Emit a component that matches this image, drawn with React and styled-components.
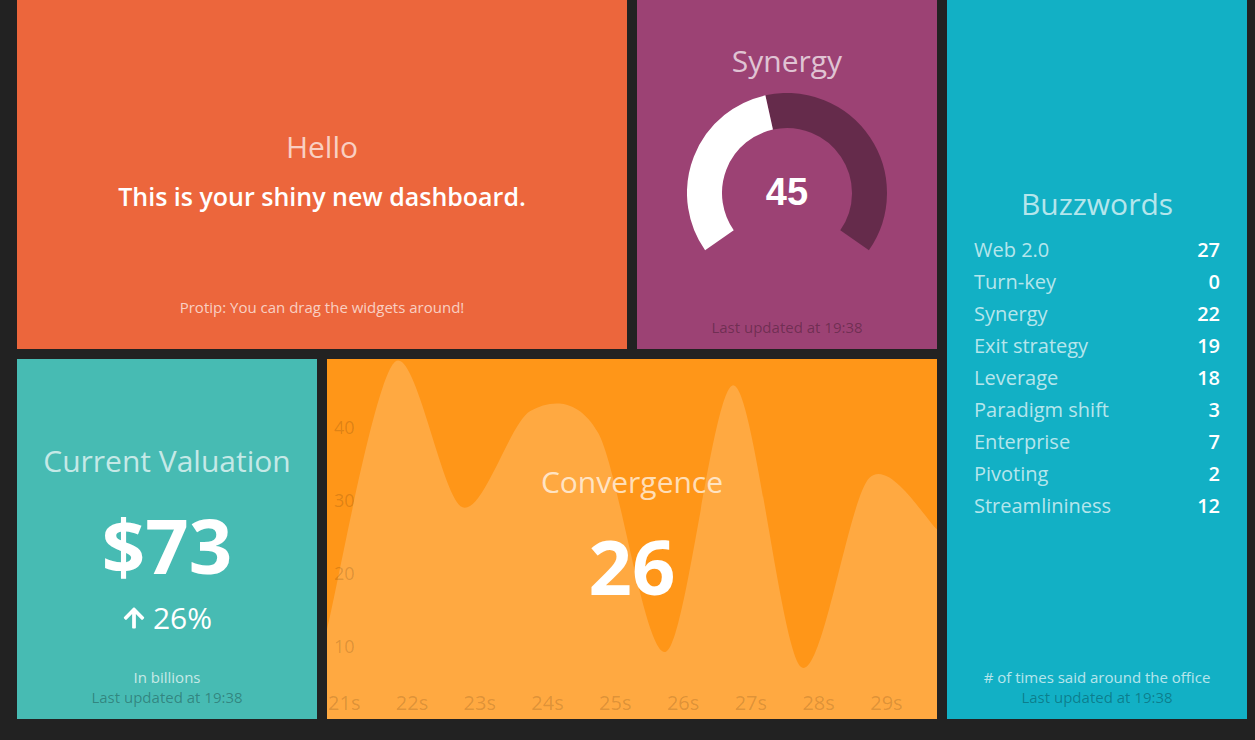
import React from 'react';
import styled, { createGlobalStyle } from 'styled-components';
import { FaArrowUp } from 'react-icons/fa';

const GlobalStyle = createGlobalStyle`
    html, body {
        margin: 0;
        padding: 0;
        background-color: #222;
        overflow: hidden;
    }
    body {
        font-family: "Open Sans", "Liberation Sans", sans-serif;
        height: 740px;
    }
`;

const buzzwords = [
    { label: 'Web 2.0', value: 27 },
    { label: 'Turn-key', value: 0 },
    { label: 'Synergy', value: 22 },
    { label: 'Exit strategy', value: 19 },
    { label: 'Leverage', value: 18 },
    { label: 'Paradigm shift', value: 3 },
    { label: 'Enterprise', value: 7 },
    { label: 'Pivoting', value: 2 },
    { label: 'Streamlininess', value: 12 },
];

const convergence = [12.3, 48.9, 29, 42.2, 39.2, 9.2, 45.7, 7.1, 33, 26];

// cardinal spline, same shape as d3 "cardinal" with tension 0.7
const areaPath = (values, w, h, scale) => {
    const step = w / (values.length - 1);
    const pts = values.map((v, i) => [i * step, h - v * scale]);
    const tan = pts.map((p, i) => {
        const a = pts[Math.max(i - 1, 0)];
        const b = pts[Math.min(i + 1, pts.length - 1)];
        return [(b[0] - a[0]) * 0.15, (b[1] - a[1]) * 0.15];
    });
    let d = `M${pts[0][0]},${pts[0][1]}`;
    for (let i = 1; i < pts.length; i++) {
        const p0 = pts[i - 1], p1 = pts[i];
        d += ` C${p0[0] + tan[i - 1][0]},${p0[1] + tan[i - 1][1]} ${p1[0] - tan[i][0]},${p1[1] - tan[i][1]} ${p1[0]},${p1[1]}`;
    }
    d += ` L${w},${h} L0,${h} Z`;
    return d;
};

const arc = (cx, cy, r, from, to) => {
    const pt = (deg) => {
        const rad = (deg - 90) * Math.PI / 180;
        return [cx + r * Math.cos(rad), cy + r * Math.sin(rad)];
    };
    const [x1, y1] = pt(from);
    const [x2, y2] = pt(to);
    const large = to - from > 180 ? 1 : 0;
    return `M${x1},${y1} A${r},${r} 0 ${large} 1 ${x2},${y2}`;
};

const Meter = ({ value, max }) => {
    const split = -125 + 250 * value / max;
    return (
        <MeterWrap>
            <svg width="200" height="200" viewBox="0 0 200 200">
                <path d={arc(100, 100, 82.5, split, 125)} fill="none" stroke="rgba(0,0,0,0.35)" strokeWidth="35" />
                <path d={arc(100, 100, 82.5, -125, split)} fill="none" stroke="#fff" strokeWidth="35" />
            </svg>
            <MeterValue>{value}</MeterValue>
        </MeterWrap>
    );
};

const Graph = () => {
    const w = 610, h = 360, scale = 7.3;
    const step = w / 9;
    return (
        <GraphSvg width={w} height={h} viewBox={`0 0 ${w} ${h}`}>
            <path d={areaPath(convergence, w, h, scale)} fill="rgba(255,255,255,0.18)" />
            {[10, 20, 30, 40].map(t => (
                <YTick key={t} x="7" y={h - t * scale + 7}>{t}</YTick>
            ))}
            {Array.from({ length: 9 }, (_, i) => (
                <XTick key={i} x={i * step + 1} y="351">{21 + i}s</XTick>
            ))}
        </GraphSvg>
    );
};

const App = () => {
    return (
        <React.Fragment>
            <GlobalStyle />
            <Board>
                <Widget $bg="#ec663c" $col="1 / span 2" $row="1">
                    <Body>
                        <Title>Hello</Title>
                        <Text>This is your shiny new dashboard.</Text>
                    </Body>
                    <Footer>
                        <MoreInfo>Protip: You can drag the widgets around!</MoreInfo>
                        <UpdatedAt />
                    </Footer>
                </Widget>

                <Widget $bg="#9c4274" $col="3" $row="1">
                    <Body>
                        <Title>Synergy</Title>
                        <Meter value={45} max={100} />
                    </Body>
                    <Footer>
                        <MoreInfo />
                        <UpdatedAt>Last updated at 19:38</UpdatedAt>
                    </Footer>
                </Widget>

                <Widget $bg="#12b0c5" $col="4" $row="1 / span 2">
                    <Body>
                        <Title>Buzzwords</Title>
                        <List>
                            {buzzwords.map((b, index) => (
                                <Item key={index}>
                                    <Label>{b.label}</Label>
                                    <Value>{b.value}</Value>
                                </Item>
                            ))}
                        </List>
                    </Body>
                    <Footer>
                        <MoreInfo># of times said around the office</MoreInfo>
                        <UpdatedAt>Last updated at 19:38</UpdatedAt>
                    </Footer>
                </Widget>

                <Widget $bg="#47bbb3" $col="1" $row="2">
                    <Body>
                        <Title>Current Valuation</Title>
                        <BigValue>$73</BigValue>
                        <ChangeRate><FaArrowUp size={24} />26%</ChangeRate>
                    </Body>
                    <Footer>
                        <MoreInfo>In billions</MoreInfo>
                        <UpdatedAt>Last updated at 19:38</UpdatedAt>
                    </Footer>
                </Widget>

                <Widget $bg="#ff9618" $col="2 / span 2" $row="2">
                    <Graph />
                    <Body>
                        <Title>Convergence</Title>
                        <BigValue>26</BigValue>
                    </Body>
                    <Footer>
                        <MoreInfo />
                        <UpdatedAt />
                    </Footer>
                </Widget>
            </Board>
        </React.Fragment>
    );
};

const Board = styled.div`
    display: grid;
    grid-template-columns: repeat(4, 300px);
    grid-template-rows: 360px 360px;
    gap: 10px;
    padding-left: 17px;
    margin-top: -11px;
`;

const Widget = styled.div`
    grid-column: ${props => props.$col};
    grid-row: ${props => props.$row};
    background-color: ${props => props.$bg};
    display: flex;
    flex-direction: column;
    box-sizing: border-box;
    padding: 25px 12px 12px;
    position: relative;
    overflow: hidden;
    text-align: center;
    color: #fff;
`;

const Body = styled.div`
    flex: 1;
    min-height: 0;
    display: flex;
    flex-direction: column;
    align-items: center;
    justify-content: center;
    padding-top: 27px;
    position: relative;
    z-index: 1;
`;

const Title = styled.h1`
    margin: 0 0 12px;
    font-size: 30px;
    line-height: 41px;
    font-weight: 400;
    color: rgba(255, 255, 255, 0.7);
`;

const Text = styled.h3`
    margin: 0;
    font-size: 25px;
    line-height: 34px;
    font-weight: 600;
    color: #fff;
`;

const BigValue = styled.h2`
    margin: 0;
    font-size: 76px;
    line-height: 104px;
    font-weight: 700;
    color: #fff;
`;

const ChangeRate = styled.p`
    margin: 0;
    font-size: 30px;
    line-height: 42px;
    font-weight: 400;
    color: #fff;
    display: flex;
    align-items: center;
    gap: 7px;
`;

const Footer = styled.div`
    position: relative;
    z-index: 1;
`;

const MoreInfo = styled.p`
    margin: 0;
    height: 20px;
    font-size: 15px;
    line-height: 20px;
    color: rgba(255, 255, 255, 0.7);
`;

const UpdatedAt = styled.p`
    margin: 0;
    height: 20px;
    font-size: 15px;
    line-height: 20px;
    color: rgba(0, 0, 0, 0.3);
`;

const MeterWrap = styled.div`
    position: relative;
    flex-shrink: 0;
    width: 200px;
    height: 200px;
    padding-bottom: 6px;
`;

const MeterValue = styled.span`
    position: absolute;
    left: 0;
    right: 0;
    top: 0;
    height: 200px;
    display: flex;
    align-items: center;
    justify-content: center;
    font-family: "Liberation Sans", Arial, sans-serif;
    font-weight: 700;
    font-size: 38px;
    color: #fff;
`;

const List = styled.ul`
    align-self: stretch;
    margin: 0 15px 2px;
    padding: 0;
    list-style: none;
    text-align: left;
`;

const Item = styled.li`
    display: flex;
    justify-content: space-between;
    font-size: 20px;
    line-height: 27px;
    margin-bottom: 5px;
`;

const Label = styled.span`
    color: rgba(255, 255, 255, 0.7);
`;

const Value = styled.span`
    color: #fff;
    font-weight: 600;
`;

const GraphSvg = styled.svg`
    position: absolute;
    left: 0;
    top: 0;
`;

const YTick = styled.text`
    font-family: "Open Sans", "Liberation Sans", sans-serif;
    font-size: 18px;
    fill: rgba(0, 0, 0, 0.15);
`;

const XTick = styled.text`
    font-family: "Open Sans", "Liberation Sans", sans-serif;
    font-size: 20px;
    fill: rgba(0, 0, 0, 0.15);
`;

export default App;
